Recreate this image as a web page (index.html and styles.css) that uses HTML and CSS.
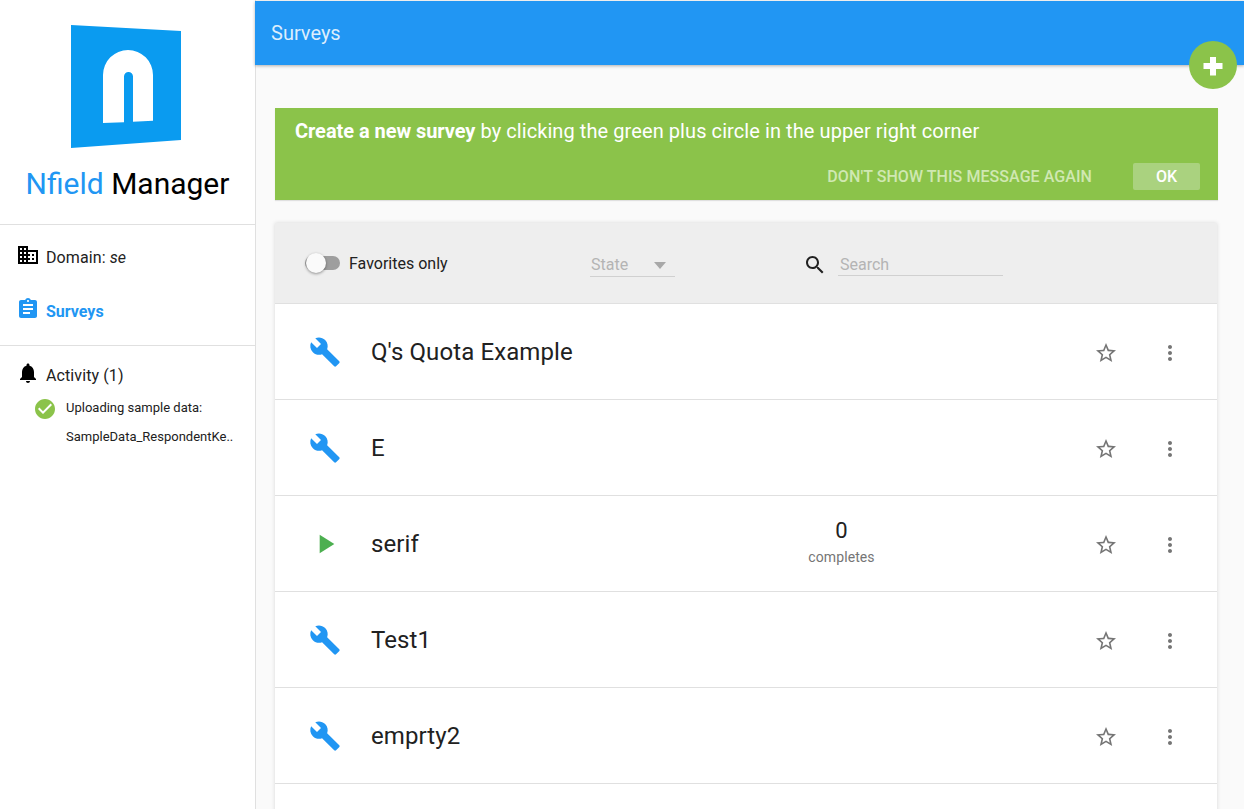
FILE: index.html
```html
<!DOCTYPE html>
<html>
<head>
    <meta charset="UTF-8">
    <title>Nfield Manager</title>
    <link rel="stylesheet" href="styles.css">
</head>
<body>
    <!-- Icon definitions -->
    <svg class="icon-defs" width="0" height="0">
        <symbol id="i-domain" viewBox="0 0 24 24"><path d="M12 7V3H2v18h20V7H12zM6 19H4v-2h2v2zm0-4H4v-2h2v2zm0-4H4V9h2v2zm0-4H4V5h2v2zm4 12H8v-2h2v2zm0-4H8v-2h2v2zm0-4H8V9h2v2zm0-4H8V5h2v2zm10 12h-8v-2h2v-2h-2v-2h2v-2h-2V9h8v10zm-2-8h-2v2h2v-2zm0 4h-2v2h2v-2z"/></symbol>
        <symbol id="i-assignment" viewBox="0 0 24 24"><path d="M19 3h-4.18C14.4 1.84 13.3 1 12 1c-1.3 0-2.4.84-2.82 2H5c-1.1 0-2 .9-2 2v14c0 1.1.9 2 2 2h14c1.1 0 2-.9 2-2V5c0-1.1-.9-2-2-2zm-7 0c.55 0 1 .45 1 1s-.45 1-1 1-1-.45-1-1 .45-1 1-1zm2 14H7v-2h7v2zm3-4H7v-2h10v2zm0-4H7V7h10v2z"/></symbol>
        <symbol id="i-bell" viewBox="0 0 24 24"><path d="M12 22c1.1 0 2-.9 2-2h-4c0 1.1.89 2 2 2zm6-6v-5c0-3.07-1.64-5.64-4.5-6.32V4c0-.83-.67-1.5-1.5-1.5s-1.5.67-1.5 1.5v.68C7.63 5.36 6 7.92 6 11v5l-2 2v1h16v-1l-2-2z"/></symbol>
        <symbol id="i-check" viewBox="0 0 24 24"><path d="M12 2C6.48 2 2 6.48 2 12s4.48 10 10 10 10-4.48 10-10S17.52 2 12 2zm-2 15l-5-5 1.41-1.41L10 14.17l7.59-7.59L19 8l-9 9z"/></symbol>
        <symbol id="i-build" viewBox="0 0 24 24"><path d="M22.7 19l-9.1-9.1c.9-2.3.4-5-1.5-6.9-2-2-5-2.4-7.4-1.3L9 6 6 9 1.6 4.7C.4 7.1.9 10.1 2.9 12.1c1.9 1.9 4.6 2.4 6.9 1.5l9.1 9.1c.4.4 1 .4 1.4 0l2.3-2.3c.5-.4.5-1.1.1-1.4z"/></symbol>
        <symbol id="i-play" viewBox="0 0 24 24"><path d="M8 5v14l11-7z"/></symbol>
        <symbol id="i-star" viewBox="0 0 24 24"><path d="M22 9.24l-7.19-.62L12 2 9.19 8.63 2 9.24l5.46 4.73L5.82 21 12 17.27 18.18 21l-1.63-7.03L22 9.24zM12 15.4l-3.76 2.27 1-4.28-3.32-2.88 4.38-.38L12 6.1l1.71 4.04 4.38.38-3.32 2.88 1 4.28L12 15.4z"/></symbol>
        <symbol id="i-more" viewBox="0 0 24 24"><path d="M12 8c1.1 0 2-.9 2-2s-.9-2-2-2-2 .9-2 2 .9 2 2 2zm0 2c-1.1 0-2 .9-2 2s.9 2 2 2 2-.9 2-2-.9-2-2-2zm0 6c-1.1 0-2 .9-2 2s.9 2 2 2 2-.9 2-2-.9-2-2-2z"/></symbol>
        <symbol id="i-search" viewBox="0 0 24 24"><path d="M15.5 14h-.79l-.28-.27C15.41 12.59 16 11.11 16 9.5 16 5.91 13.09 3 9.5 3S3 5.91 3 9.5 5.91 16 9.5 16c1.61 0 3.09-.59 4.23-1.57l.27.28v.79l5 4.99L20.49 19l-4.99-5zm-6 0C7.01 14 5 11.99 5 9.5S7.01 5 9.5 5 14 7.01 14 9.5 11.99 14 9.5 14z"/></symbol>
    </svg>

    <div class="app">
        <!-- Sidebar -->
        <aside class="sidebar">
            <div class="brand">
                <svg class="logo" width="110" height="123" viewBox="0 0 110 123">
                    <path fill="#0a9bf0" fill-rule="evenodd" d="M0 0L110 6V115L0 123ZM32 98L53 97.300V51.500A4.500 4.500 0 0 1 62 51.500V96.800L82 95.700V50A25 25 0 0 0 32 50Z"/>
                </svg>
                <div class="brand-name"><span class="brand-accent">Nfield</span> Manager</div>
            </div>
            <nav class="nav">
                <div class="nav-item nav-domain">
                    <svg class="nav-icon"><use href="#i-domain"/></svg>
                    <span>Domain: <em>se</em></span>
                </div>
                <div class="nav-item nav-active">
                    <svg class="nav-icon"><use href="#i-assignment"/></svg>
                    <span>Surveys</span>
                </div>
            </nav>
            <div class="activity">
                <div class="nav-item">
                    <svg class="nav-icon"><use href="#i-bell"/></svg>
                    <span>Activity (1)</span>
                </div>
                <div class="activity-entry">
                    <svg class="activity-check"><use href="#i-check"/></svg>
                    <div class="activity-text">
                        <div>Uploading sample data:</div>
                        <div>SampleData_RespondentKe..</div>
                    </div>
                </div>
            </div>
        </aside>

        <!-- Main content -->
        <div class="main">
            <header class="topbar">Surveys</header>
            <button class="fab" type="button">
                <svg class="fab-plus" width="22" height="22" viewBox="0 0 22 22"><path d="M8 2h6v6h6.500v6H14v6.500H8V14H1.500V8H8z" fill="#fff"/></svg>
            </button>

            <div class="content">
                <div class="notice">
                    <p class="notice-text"><strong>Create a new survey</strong> by clicking the green plus circle in the upper right corner</p>
                    <div class="notice-actions">
                        <span class="notice-dismiss">DON'T SHOW THIS MESSAGE AGAIN</span>
                        <button class="notice-ok" type="button">OK</button>
                    </div>
                </div>

                <section class="card">
                    <div class="filters">
                        <div class="toggle"><span class="toggle-track"></span><span class="toggle-thumb"></span></div>
                        <span class="toggle-label">Favorites only</span>
                        <div class="state-select">
                            <span>State</span>
                            <span class="caret"></span>
                        </div>
                        <svg class="search-icon"><use href="#i-search"/></svg>
                        <div class="search-field">Search</div>
                    </div>

                    <div class="row">
                        <svg class="row-state state-build"><use href="#i-build"/></svg>
                        <div class="row-title">Q's Quota Example</div>
                        <svg class="row-star"><use href="#i-star"/></svg>
                        <svg class="row-more"><use href="#i-more"/></svg>
                    </div>
                    <div class="row">
                        <svg class="row-state state-build"><use href="#i-build"/></svg>
                        <div class="row-title">E</div>
                        <svg class="row-star"><use href="#i-star"/></svg>
                        <svg class="row-more"><use href="#i-more"/></svg>
                    </div>
                    <div class="row">
                        <svg class="row-state state-play"><use href="#i-play"/></svg>
                        <div class="row-title">serif</div>
                        <div class="row-stat">
                            <div class="stat-value">0</div>
                            <div class="stat-label">completes</div>
                        </div>
                        <svg class="row-star"><use href="#i-star"/></svg>
                        <svg class="row-more"><use href="#i-more"/></svg>
                    </div>
                    <div class="row">
                        <svg class="row-state state-build"><use href="#i-build"/></svg>
                        <div class="row-title">Test1</div>
                        <svg class="row-star"><use href="#i-star"/></svg>
                        <svg class="row-more"><use href="#i-more"/></svg>
                    </div>
                    <div class="row">
                        <svg class="row-state state-build"><use href="#i-build"/></svg>
                        <div class="row-title">emprty2</div>
                        <svg class="row-star"><use href="#i-star"/></svg>
                        <svg class="row-more"><use href="#i-more"/></svg>
                    </div>
                    <div class="row"></div>
                </section>
            </div>
        </div>
    </div>
</body>
</html>
```

FILE: styles.css
```css
html, body {
    height: 100%;
}

body {
    margin: 0;
    font-family: Roboto, "Liberation Sans", sans-serif;
    color: #212121;
    background-color: #fafafa;
    overflow: hidden;
}

.icon-defs {
    display: none;
}

.app {
    display: flex;
    height: 100vh;
    overflow: hidden;
}

/* Sidebar */
.sidebar {
    width: 255px;
    flex-shrink: 0;
    background-color: #fff;
}

.brand {
    height: 225px;
    box-sizing: border-box;
    padding-top: 25px;
    border-bottom: 1px solid #e0e0e0;
    text-align: center;
}

.logo {
    display: block;
    margin-left: 71px;
}

.brand-name {
    margin-top: 18px;
    font-size: 30px;
    line-height: 36px;
    color: #000;
}

.brand-accent {
    color: #2196f3;
}

.nav {
    height: 121px;
    box-sizing: border-box;
    border-bottom: 1px solid #e0e0e0;
    padding-top: 20px;
}

.nav-item {
    display: flex;
    align-items: center;
    height: 24px;
    padding-left: 16px;
    font-size: 16px;
    letter-spacing: 0.1px;
    color: #212121;
}

.nav-icon {
    width: 24px;
    height: 24px;
    margin-top: -4px;
    margin-right: 6px;
    fill: #000;
}

.nav-domain {
    margin-bottom: 30px;
}

.nav-active {
    color: #2196f3;
    font-weight: 700;
    letter-spacing: 0;
}

.nav-active .nav-icon {
    fill: #2196f3;
}

.activity {
    padding-top: 17px;
}

.activity-entry {
    display: flex;
    padding-left: 33px;
    margin-top: 6px;
}

.activity-check {
    width: 24px;
    height: 24px;
    fill: #8bc34a;
    margin-right: 9px;
    flex-shrink: 0;
    margin-top: 4px;
}

.activity-text {
    font-size: 13px;
    line-height: 29px;
    color: #212121;
    white-space: nowrap;
}

/* Main */
.main {
    position: relative;
    flex: 1;
    min-width: 0;
    padding-top: 1px;
    box-shadow: inset 1px 0 0 #e0e0e0;
}

.topbar {
    height: 64px;
    padding-left: 16px;
    line-height: 64px;
    font-size: 20px;
    color: rgba(255, 255, 255, 0.85);
    background-color: #2196f3;
    box-shadow: 0 1px 3px rgba(0, 0, 0, 0.3);
}

.fab {
    position: absolute;
    top: 41px;
    right: 7px;
    width: 48px;
    height: 48px;
    padding: 0;
    border: none;
    border-radius: 50%;
    background-color: #8bc34a;
    display: flex;
    align-items: center;
    justify-content: center;
}

.fab-plus {
    margin-top: 2px;
    margin-right: 1px;
}

.content {
    padding: 43px 26px 0 20px;
}

.notice {
    height: 92px;
    box-sizing: border-box;
    background-color: #8bc34a;
    color: #fff;
    padding: 12px 18px 0 20px;
    box-shadow: 0 1px 1px rgba(0, 0, 0, 0.1);
}

.notice-text {
    margin: 0;
    font-size: 20px;
    line-height: 23px;
    letter-spacing: 0.08px;
}

.notice-text strong {
    letter-spacing: -0.05px;
}

.notice-actions {
    display: flex;
    justify-content: flex-end;
    align-items: center;
    margin-top: 20px;
}

.notice-dismiss {
    font-size: 16px;
    font-weight: 500;
    letter-spacing: 0.07px;
    color: #d0e8b2;
    margin-right: 41px;
}

.notice-ok {
    width: 67px;
    height: 27px;
    padding: 0;
    border: none;
    border-radius: 2px;
    background-color: #aad27f;
    color: #fff;
    font-family: inherit;
    font-size: 16px;
    font-weight: 500;
}

.card {
    margin-top: 23px;
    margin-right: 1px;
    background-color: #fff;
    box-shadow: 0 0 4px rgba(0, 0, 0, 0.14);
}

.filters {
    position: relative;
    display: flex;
    align-items: center;
    height: 81px;
    box-sizing: border-box;
    background-color: #eee;
    border-bottom: 1px solid #e0e0e0;
}

.toggle {
    position: relative;
    width: 36px;
    height: 20px;
    margin-left: 30px;
}

.toggle-track {
    position: absolute;
    top: 3px;
    left: 0;
    width: 35px;
    height: 14px;
    border-radius: 7px;
    background-color: #9e9e9e;
}

.toggle-thumb {
    position: absolute;
    top: 0;
    left: 1px;
    width: 20px;
    height: 20px;
    border-radius: 50%;
    background-color: #fafafa;
    box-shadow: 0 1px 3px rgba(0, 0, 0, 0.4);
}

.toggle-label {
    margin-left: 8px;
    width: 241px;
    font-size: 16px;
}

.state-select {
    display: flex;
    align-items: center;
    justify-content: space-between;
    width: 85px;
    height: 26px;
    box-sizing: border-box;
    margin-top: 2px;
    padding: 2px 9px 0 1px;
    border-bottom: 1px solid #d0d0d0;
    font-size: 16px;
    color: #b4b4b4;
}

.caret {
    width: 0;
    height: 0;
    margin-top: 2px;
    border-left: 6.500px solid transparent;
    border-right: 6.500px solid transparent;
    border-top: 7px solid #a8a8a8;
}

.search-icon {
    width: 24px;
    height: 24px;
    margin-left: 128px;
    margin-top: 3px;
    fill: #212121;
}

.search-field {
    width: 165px;
    height: 26px;
    box-sizing: border-box;
    margin-left: 11px;
    padding-left: 2px;
    border-bottom: 1px solid #d0d0d0;
    font-size: 16px;
    line-height: 30px;
    color: #b4b4b4;
}

.row {
    display: flex;
    align-items: center;
    height: 96px;
    box-sizing: border-box;
    border-bottom: 1px solid #e0e0e0;
    position: relative;
}

.row-state {
    width: 32px;
    height: 32px;
    margin-left: 34px;
    flex-shrink: 0;
}

.state-build {
    fill: #2196f3;
}

.state-play {
    fill: #4caf50;
}

.row-title {
    margin-left: 30px;
    flex: 1;
    font-size: 24px;
    letter-spacing: 0.1px;
    color: #212121;
}

.row-stat {
    position: absolute;
    left: 517px;
    width: 99px;
    text-align: center;
}

.stat-value {
    font-size: 22px;
    line-height: 26px;
    margin-bottom: 1px;
}

.stat-label {
    font-size: 14px;
    line-height: 24px;
    letter-spacing: 0.1px;
    color: #757575;
}

.row-star {
    width: 24px;
    height: 24px;
    fill: #757575;
    margin-top: 2px;
    margin-right: 40px;
}

.row-more {
    width: 24px;
    height: 24px;
    fill: #757575;
    margin-top: 2px;
    margin-right: 35px;
}
```
